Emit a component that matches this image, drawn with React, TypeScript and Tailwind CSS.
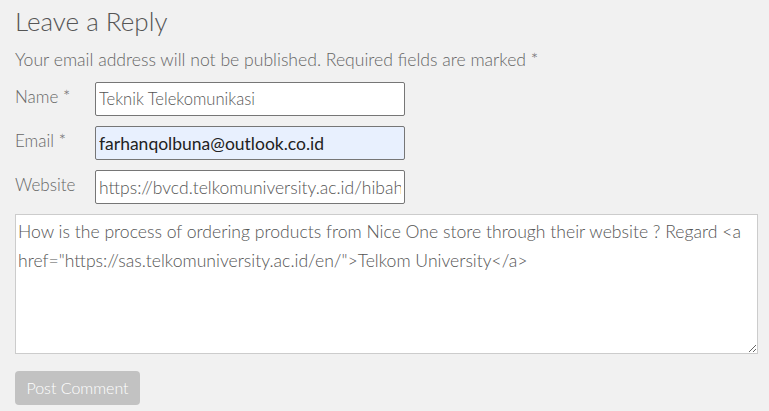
export default function App() {
  return (
    <div
      className="w-[769px] h-[411px] bg-[#f1f1f1] px-[15px] pt-[4px] text-[#666] font-light"
      style={{ fontFamily: "Lato, 'Open Sans', sans-serif" }}
    >
      <h3 className="text-[26px] font-light leading-[34px] text-[#555]">Leave a Reply</h3>
      <p className="mt-[10px] text-[17.6px] leading-[24px]">
        Your email address will not be published. Required fields are marked *
      </p>
      <form className="mt-[10px] flex flex-col">
        <div className="flex items-start">
          <label className="w-[80px] pt-[3px] text-[17px] leading-[24px]">Name *</label>
          <input
            defaultValue="Teknik Telekomunikasi"
            className="w-[310px] h-[34px] px-[3px] bg-white border border-[#767676] rounded-[2px] text-[16.6px] font-light text-[#555] outline-none"
          />
        </div>
        <div className="mt-[10px] flex items-start">
          <label className="w-[80px] pt-[3px] text-[17px] leading-[24px]">Email *</label>
          <input
            defaultValue="farhanqolbuna@outlook.co.id"
            className="w-[310px] h-[34px] px-[3px] bg-[#e8f0fe] border border-[#767676] rounded-[2px] text-[17.5px] font-normal text-[#222] outline-none"
          />
        </div>
        <div className="mt-[10px] flex items-start">
          <label className="w-[80px] pt-[3px] text-[17px] leading-[24px]">Website</label>
          <input
            defaultValue="https://bvcd.telkomuniversity.ac.id/hibah"
            className="w-[310px] h-[34px] px-[3px] bg-white border border-[#767676] rounded-[2px] text-[17.5px] font-light text-[#555] outline-none"
          />
        </div>
        <textarea
          defaultValue={'How is the process of ordering products from Nice One store through their website ? Regard <a href="https://sas.telkomuniversity.ac.id/en/">Telkom University</a>'}
          className="mt-[10px] w-[743px] h-[140px] px-[2px] py-[2px] bg-white border border-[#ccc] text-[17.6px] leading-[29px] font-light text-[#555] outline-none resize"
        />
        <div className="mt-[17px]">
          <button
            type="button"
            className="w-[125px] h-[34px] rounded-[4px] bg-[#c2c2c2] text-white text-[16px] font-light"
          >
            Post Comment
          </button>
        </div>
      </form>
    </div>
  )
}
